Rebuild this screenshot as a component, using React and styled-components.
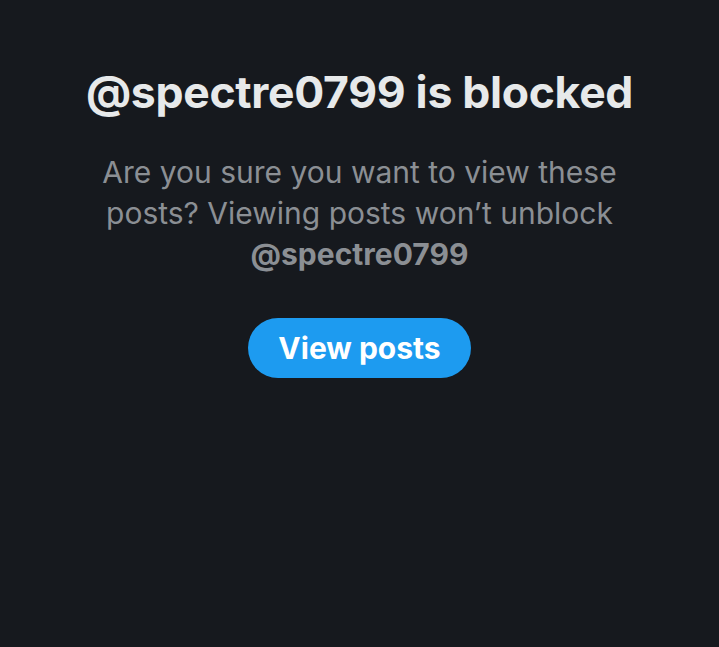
import React from 'react';
import styled, { createGlobalStyle } from 'styled-components';

const GlobalStyle = createGlobalStyle`
  html, body {
    margin: 0;
    padding: 0;
    background: #16191e;
  }
  body {
    font-family: Inter, "Noto Sans", "Liberation Sans", sans-serif;
  }
`;

const Screen = styled.div`
  width: 719px;
  height: 647px;
  background: #16191e;
  display: flex;
  flex-direction: column;
  align-items: center;
  padding-top: 64px;
  box-sizing: border-box;
`;

const Title = styled.h1`
  margin: 0;
  font-size: 44.5px;
  line-height: 56px;
  font-weight: 700;
  color: #e7e9ea;
  letter-spacing: -0.3px;
`;

const Message = styled.p`
  margin: 32px 0 0;
  width: 530px;
  text-align: center;
  font-size: 30px;
  line-height: 41px;
  font-weight: 400;
  color: #8b8f94;
`;

const Handle = styled.span`
  font-weight: 700;
`;

const ViewButton = styled.button`
  margin-top: 43px;
  width: 223px;
  height: 60px;
  border: 0;
  border-radius: 30px;
  background: #1d9bf0;
  color: #ffffff;
  font-family: inherit;
  font-size: 30px;
  font-weight: 700;
  cursor: pointer;
`;

export default function App() {
  return (
    <>
      <GlobalStyle />
      <Screen>
        <Title>@spectre0799 is blocked</Title>
        <Message>
          Are you sure you want to view these posts? Viewing posts won’t unblock{' '}
          <Handle>@spectre0799</Handle>
        </Message>
        <ViewButton>View posts</ViewButton>
      </Screen>
    </>
  );
}
